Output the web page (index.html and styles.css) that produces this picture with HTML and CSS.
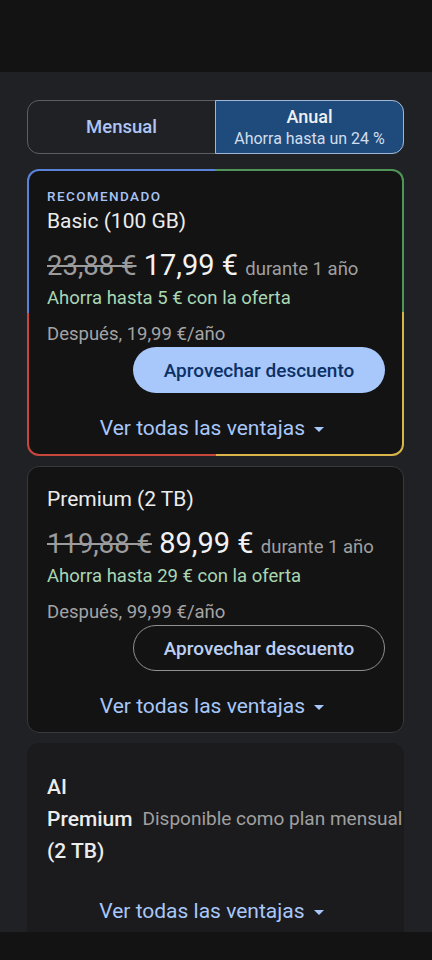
FILE: index.html
```html
<!DOCTYPE html>
<html lang="es">
  <head>
    <meta charset="UTF-8" />
    <meta name="viewport" content="width=device-width, initial-scale=1.0" />
    <title>Planes</title>
    <link rel="stylesheet" href="styles.css">
  </head>
  <body>
    <div class="screen">
      <div class="status-bar"></div>

      <main class="content">
        <div class="period-toggle">
          <button class="period">Mensual</button>
          <button class="period active">
            <span class="period-name">Anual</span>
            <span class="period-note">Ahorra hasta un 24 %</span>
          </button>
        </div>

        <section class="plan-card recommended">
          <p class="badge">RECOMENDADO</p>
          <h2 class="plan-name">Basic (100 GB)</h2>
          <p class="price-line">
            <s class="old-price">23,88 €</s>
            <span class="new-price">17,99 €</span>
            <span class="period-text">durante 1 año</span>
          </p>
          <p class="saving">Ahorra hasta 5 € con la oferta</p>
          <p class="after">Después, 19,99 €/año</p>
          <div class="actions">
            <button class="deal filled">Aprovechar descuento</button>
          </div>
          <button class="more">Ver todas las ventajas <span class="caret"></span></button>
        </section>

        <section class="plan-card">
          <h2 class="plan-name">Premium (2 TB)</h2>
          <p class="price-line">
            <s class="old-price">119,88 €</s>
            <span class="new-price">89,99 €</span>
            <span class="period-text">durante 1 año</span>
          </p>
          <p class="saving">Ahorra hasta 29 € con la oferta</p>
          <p class="after">Después, 99,99 €/año</p>
          <div class="actions">
            <button class="deal outlined">Aprovechar descuento</button>
          </div>
          <button class="more">Ver todas las ventajas <span class="caret"></span></button>
        </section>

        <section class="plan-card monthly-only">
          <div class="plan-row">
            <h2 class="plan-name narrow">AI Premium (2 TB)</h2>
            <p class="only-monthly">Disponible como plan mensual</p>
          </div>
          <button class="more">Ver todas las ventajas <span class="caret"></span></button>
        </section>
      </main>

      <div class="nav-bar"></div>
    </div>
  </body>
</html>
```

FILE: styles.css
```css
body {
  margin: 0;
  background-color: #202125;
  color: #e3e3e3;
  font-family: Roboto, "Liberation Sans", sans-serif;
}
p, h2 {
  margin: 0;
}
button {
  font-family: inherit;
  cursor: pointer;
}
.screen {
  height: 960px;
  display: flex;
  flex-direction: column;
}
.status-bar, .nav-bar {
  background: #131314;
  flex: none;
}
.status-bar {
  height: 72px;
}
.nav-bar {
  height: 28px;
}
.content {
  flex: 1;
  overflow: hidden;
  padding: 28px 28px 0 27px;
  display: flex;
  flex-direction: column;
  gap: 10px;
}

/* period switch */
.period-toggle {
  flex: none;
  display: grid;
  grid-template-columns: 187px 1fr;
  height: 54px;
  border: 1px solid #5c5e62;
  border-radius: 12px;
  margin-bottom: 5px;
  box-sizing: border-box;
}
.period {
  background: none;
  border: none;
  color: #aec6f4;
  font-size: 18.5px;
  font-weight: 500;
  display: flex;
  flex-direction: column;
  align-items: center;
  justify-content: center;
  padding: 0;
}
.period.active {
  margin: -1px -1px -1px 0;
  background: #1e4b7b;
  border: 1px solid #9fb6d6;
  border-radius: 0 12px 12px 0;
  color: #f0f0f0;
}
.period-name {
  font-size: 18px;
  line-height: 22px;
}
.period-note {
  font-size: 16px;
  font-weight: 400;
  line-height: 21px;
  color: #d2ddee;
}

/* cards */
.plan-card {
  flex: none;
  background: #131314;
  border: 1px solid #38393c;
  border-radius: 12px;
  padding: 19px 18px 11px 19px;
}
.plan-card.recommended {
  border: 2px solid transparent;
  background:
    linear-gradient(#131314, #131314) padding-box,
    conic-gradient(#4f9557 0deg 90deg, #dcb54a 90deg 180deg, #c7473d 180deg 270deg, #5a82d8 270deg 360deg) border-box;
  padding: 15px 17px 11px 18px;
}
.plan-card.monthly-only {
  background: #1b1b1d;
  border: none;
  padding: 28px 20px 14px;
}
.badge {
  color: #a8c4f4;
  font-size: 13.5px;
  font-weight: 500;
  letter-spacing: 1.4px;
  line-height: 20px;
  margin-bottom: 2px;
}
.plan-name {
  font-size: 21px;
  font-weight: 400;
  line-height: 26px;
  color: #ececec;
}
.price-line {
  margin-top: 13px;
  font-size: 29px;
  line-height: 36px;
  white-space: nowrap;
}
.price-line span, .price-line s {
  line-height: 1;
}
.old-price {
  font-size: 27.5px;
  color: #9c9c9c;
  text-decoration-thickness: 2px;
}
.new-price {
  font-size: 29px;
  color: #f2f2f2;
}
.period-text {
  font-size: 18.5px;
  color: #a0a0a0;
}
.saving {
  font-size: 18.5px;
  line-height: 24px;
  margin-top: 3px;
  color: #a9d7b3;
}
.after {
  font-size: 18.5px;
  line-height: 24px;
  margin-top: 12px;
  color: #a4a4a4;
}
.actions {
  display: flex;
  justify-content: flex-end;
  margin-top: 1px;
}
.deal {
  width: 252px;
  height: 46px;
  border-radius: 23px;
  font-size: 19px;
  font-weight: 500;
  padding: 0;
}
.deal.filled {
  background: #a8c7fa;
  border: none;
  color: #0b3166;
}
.deal.outlined {
  background: none;
  border: 1px solid #8e918f;
  color: #bcd0f5;
}
.more {
  display: block;
  margin: 20px auto 0;
  background: none;
  border: none;
  color: #a8c7fa;
  font-size: 21px;
  line-height: 30px;
  padding: 0;
}
.caret {
  display: inline-block;
  vertical-align: middle;
  margin: 0 8px 0 4px;
  border-left: 5px solid transparent;
  border-right: 5px solid transparent;
  border-top: 5px solid currentColor;
}
.plan-row {
  display: flex;
  align-items: center;
  gap: 10px;
}
.plan-name.narrow {
  width: 88px;
  line-height: 32px;
  font-weight: 500;
}
.only-monthly {
  font-size: 19px;
  line-height: 24px;
  color: #a0a0a0;
  white-space: nowrap;
}
.monthly-only .more {
  margin-top: 29px;
}
```
